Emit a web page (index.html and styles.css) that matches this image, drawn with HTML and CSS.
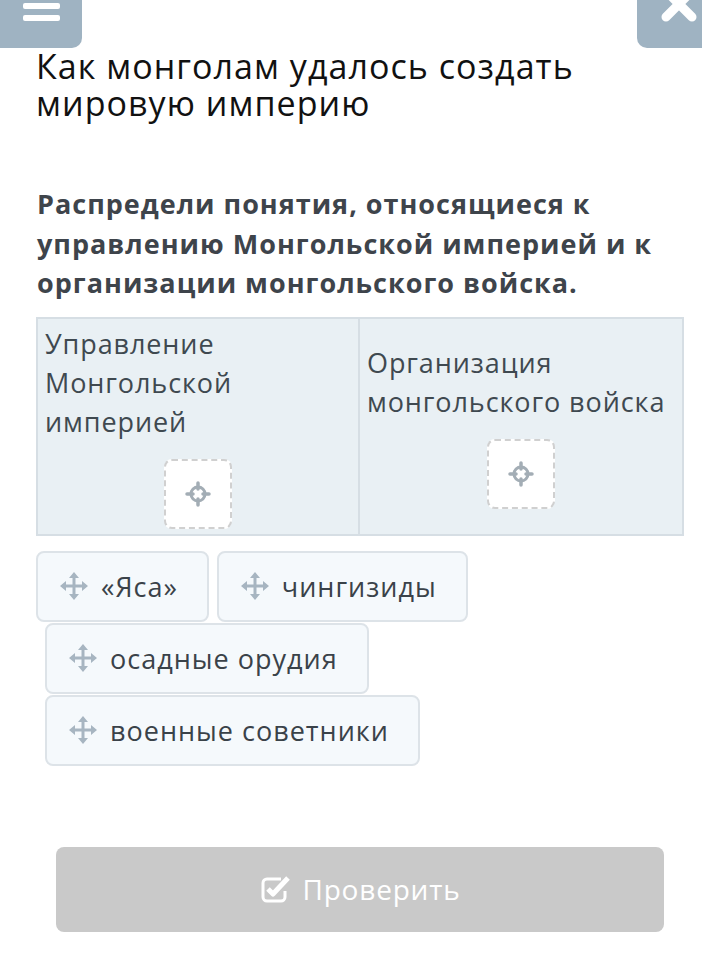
FILE: index.html
```html
<!DOCTYPE html>
<html lang="ru">

<head>
    <meta charset="UTF-8">
    <meta name="viewport" content="width=device-width, initial-scale=1.0">
    <title>Как монголам удалось создать мировую империю</title>
    <link rel="stylesheet" href="styles.css">
</head>

<body>
    <div class="barra">
        <button class="boton-barra boton-menu" type="button" aria-label="Меню">
            <svg width="82" height="48" viewBox="0 0 82 48">
                <rect x="23" y="-9" width="37" height="6" rx="2" fill="#fff" />
                <rect x="23" y="3" width="37" height="6" rx="2" fill="#fff" />
                <rect x="23" y="15" width="37" height="6" rx="2" fill="#fff" />
            </svg>
        </button>
        <button class="boton-barra boton-cerrar" type="button" aria-label="Закрыть">
            <svg width="65" height="48" viewBox="0 0 65 48">
                <path d="M29 -9 L55 17 M55 -9 L29 17" stroke="#fff" stroke-width="9" stroke-linecap="round" />
            </svg>
        </button>
    </div>

    <div class="contenido">
        <h1>Как монголам удалось создать мировую империю</h1>

        <p class="instruccion">Распредели понятия, относящиеся к управлению Монгольской империей и к организации монгольского войска.</p>

        <div class="tabla">
            <div class="columna">
                <div class="titulo-columna">Управление Монгольской империей</div>
                <div class="zona">
                    <svg width="26" height="26" viewBox="0 0 26 26">
                        <circle cx="13" cy="13" r="7" fill="none" stroke="#a3adb5" stroke-width="3" />
                        <path d="M13 2v6 M13 18v6 M2 13h6 M18 13h6" stroke="#a3adb5" stroke-width="3.5" stroke-linecap="round" />
                    </svg>
                </div>
            </div>
            <div class="columna">
                <div class="titulo-columna">Организация монгольского войска</div>
                <div class="zona">
                    <svg width="26" height="26" viewBox="0 0 26 26">
                        <circle cx="13" cy="13" r="7" fill="none" stroke="#a3adb5" stroke-width="3" />
                        <path d="M13 2v6 M13 18v6 M2 13h6 M18 13h6" stroke="#a3adb5" stroke-width="3.5" stroke-linecap="round" />
                    </svg>
                </div>
            </div>
        </div>

        <div class="fichas">
            <div class="fila">
                <div class="ficha">
                    <svg class="icono-mover" width="28" height="28" viewBox="0 0 28 28">
                        <path d="M14 4v20 M4 14h20" stroke="#a7b5c1" stroke-width="3" />
                        <path d="M14 0l-5 6h10z M14 28l-5-6h10z M0 14l6-5v10z M28 14l-6-5v10z" fill="#a7b5c1" />
                    </svg>
                    <span>«Яса»</span>
                </div>
                <div class="ficha">
                    <svg class="icono-mover" width="28" height="28" viewBox="0 0 28 28">
                        <path d="M14 4v20 M4 14h20" stroke="#a7b5c1" stroke-width="3" />
                        <path d="M14 0l-5 6h10z M14 28l-5-6h10z M0 14l6-5v10z M28 14l-6-5v10z" fill="#a7b5c1" />
                    </svg>
                    <span>чингизиды</span>
                </div>
            </div>
            <div class="fila sangria">
                <div class="ficha">
                    <svg class="icono-mover" width="28" height="28" viewBox="0 0 28 28">
                        <path d="M14 4v20 M4 14h20" stroke="#a7b5c1" stroke-width="3" />
                        <path d="M14 0l-5 6h10z M14 28l-5-6h10z M0 14l6-5v10z M28 14l-6-5v10z" fill="#a7b5c1" />
                    </svg>
                    <span>осадные орудия</span>
                </div>
            </div>
            <div class="fila sangria">
                <div class="ficha">
                    <svg class="icono-mover" width="28" height="28" viewBox="0 0 28 28">
                        <path d="M14 4v20 M4 14h20" stroke="#a7b5c1" stroke-width="3" />
                        <path d="M14 0l-5 6h10z M14 28l-5-6h10z M0 14l6-5v10z M28 14l-6-5v10z" fill="#a7b5c1" />
                    </svg>
                    <span>военные советники</span>
                </div>
            </div>
        </div>

        <button class="comprobar" type="button">
            <svg width="31" height="28" viewBox="0 0 31 28">
                <path d="M21 4H7a4 4 0 0 0-4 4v14a4 4 0 0 0 4 4h14a4 4 0 0 0 4-4v-6" fill="none" stroke="#fff" stroke-width="3" />
                <path d="M8 14l5 5L28 3" fill="none" stroke="#fff" stroke-width="5" stroke-linejoin="round" />
            </svg>
            <span>Проверить</span>
        </button>
    </div>
</body>

</html>
```

FILE: styles.css
```css
body {
    font-family: "Open Sans", "Liberation Sans", sans-serif;
    margin: 0;
    padding: 0;
    background-color: #ffffff;
}

.barra {
    display: flex;
    justify-content: space-between;
    height: 48px;
}

.boton-barra {
    display: block;
    padding: 0;
    border: none;
    background-color: #9fb3c2;
    height: 48px;
}

.boton-barra svg {
    display: block;
}

.boton-menu {
    width: 82px;
    border-radius: 0 0 10px 0;
}

.boton-cerrar {
    width: 65px;
    border-radius: 0 0 0 10px;
}

.contenido {
    padding: 0 18px 0 36px;
}

h1 {
    margin: 0;
    font-size: 34px;
    line-height: 37px;
    font-weight: normal;
    letter-spacing: 1.05px;
    color: #111111;
}

.instruccion {
    margin: 62px 0 0 0;
    padding-left: 1px;
    font-size: 27px;
    line-height: 39.5px;
    font-weight: bold;
    letter-spacing: 1px;
    color: #3e444b;
}

.tabla {
    display: grid;
    grid-template-columns: 1fr 1fr;
    margin-top: 14px;
    border: 2px solid #d6dee4;
    background-color: #e9f0f4;
}

.columna {
    display: flex;
    flex-direction: column;
    justify-content: center;
    padding: 5px 7px;
}

.columna:first-child {
    border-right: 2px solid #d6dee4;
}

.titulo-columna {
    font-size: 27px;
    line-height: 39px;
    letter-spacing: 0.9px;
    color: #3f4950;
}

.zona {
    display: flex;
    align-items: center;
    justify-content: center;
    width: 68px;
    height: 70px;
    margin: 18px auto 0 auto;
    box-sizing: border-box;
    background-color: #ffffff;
    border: 2px dashed #d0d0d0;
    border-radius: 8px;
}

.fichas {
    margin-top: 15px;
}

.fila {
    display: flex;
    gap: 8px;
    margin-bottom: 1px;
}

.fila.sangria {
    padding-left: 9px;
}

.ficha {
    display: flex;
    align-items: center;
    gap: 13px;
    padding: 14px 29px 14px 22px;
    background-color: #f5f9fc;
    border: 2px solid #dde3e8;
    border-radius: 8px;
    font-size: 27px;
    line-height: 39px;
    letter-spacing: 1px;
    color: #3a4249;
}

.icono-mover {
    display: block;
    flex-shrink: 0;
}

.comprobar {
    display: flex;
    align-items: center;
    justify-content: center;
    gap: 12px;
    width: calc(100% - 40px);
    height: 85px;
    margin: 81px 20px 0 20px;
    border: none;
    border-radius: 8px;
    background-color: #c9c9c9;
    color: #ffffff;
    font-family: "Open Sans", "Liberation Sans", sans-serif;
    font-size: 28px;
    letter-spacing: 0.8px;
}
```
